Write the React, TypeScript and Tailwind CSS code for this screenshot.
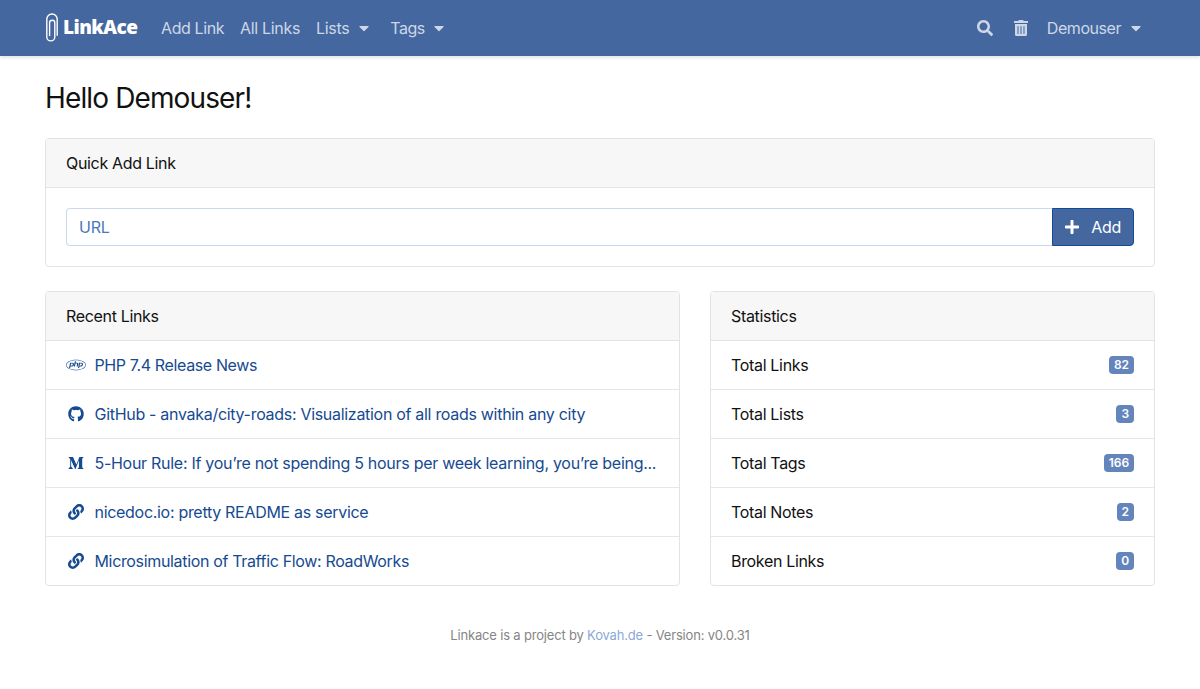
import { FaCaretDown, FaGithub, FaLink, FaMediumM, FaPhp, FaPlus, FaSearch, FaTrashAlt } from 'react-icons/fa';
import type { ReactNode } from 'react';

const links = [
  { icon: FaPhp, size: 'w-5 h-4', title: 'PHP 7.4 Release News', tracking: 'tracking-[-0.37px]' },
  { icon: FaGithub, size: 'w-4 h-4', title: 'GitHub - anvaka/city-roads: Visualization of all roads within any city', tracking: 'tracking-[-0.3px]' },
  { icon: FaMediumM, size: 'w-4 h-4', title: '5-Hour Rule: If you’re not spending 5 hours per week learning, you’re being...', tracking: 'tracking-[-0.285px]' },
  { icon: FaLink, size: 'w-4 h-4', title: 'nicedoc.io: pretty README as service', tracking: 'tracking-[-0.3px]' },
  { icon: FaLink, size: 'w-4 h-4', title: 'Microsimulation of Traffic Flow: RoadWorks', tracking: 'tracking-[-0.34px]' },
];

const stats = [
  { label: 'Total Links', value: 82 },
  { label: 'Total Lists', value: 3 },
  { label: 'Total Tags', value: 166 },
  { label: 'Total Notes', value: 2 },
  { label: 'Broken Links', value: 0 },
];

function Card({ title, className = '', children }: { title: string; className?: string; children: ReactNode }) {
  return (
    <section className={`overflow-hidden rounded border border-[#e3e3e3] bg-white ${className}`}>
      <h2 className="h-[49px] border-b border-[#e3e3e3] bg-[#f7f7f7] px-5 py-3 leading-6">{title}</h2>
      {children}
    </section>
  );
}

function Logo() {
  return (
    <a href="#" className="flex w-[93px] items-center text-white">
      <svg viewBox="0 0 14 29" className="mr-[4px] h-[29px] w-[14px] shrink-0 -translate-y-px" fill="none" stroke="currentColor" strokeWidth="1.4" strokeLinecap="round">
        <path d="M12.2 22.3V6.2a5.2 5.2 0 0 0-10.4 0v17.7a4 4 0 0 0 8 0V9.8a2.6 2.6 0 0 0-5.2 0v12.7" />
      </svg>
      <span className="-translate-y-px font-['Open_Sans',sans-serif] text-[19px] leading-7 font-extrabold tracking-[-0.55px]">LinkAce</span>
    </a>
  );
}

export default function App() {
  return (
    <div className="min-h-[689px] bg-white font-[Inter,sans-serif] text-base leading-6 tracking-[-0.33px] text-[#111]">
      <header className="flex h-14 items-center justify-between bg-[#44679f] px-[45px] text-[#cdd7e8] shadow-[0_1px_4px_rgba(0,0,0,0.15)]">
        <nav className="flex items-center">
          <Logo />
          <a href="#" className="ml-[23px] tracking-[-0.4px]">Add Link</a>
          <a href="#" className="ml-4">All Links</a>
          <a href="#" className="ml-4 flex items-center">Lists <FaCaretDown className="ml-2 h-4 w-[14px]" /></a>
          <a href="#" className="ml-[19px] flex items-center tracking-[-0.5px]">Tags <FaCaretDown className="ml-[7px] h-4 w-[14px]" /></a>
        </nav>
        <nav className="flex items-center pr-3">
          <FaSearch className="h-4 w-4" />
          <FaTrashAlt className="ml-5 h-4 w-4" />
          <a href="#" className="ml-[18px] flex items-center tracking-[-0.45px]">Demouser <FaCaretDown className="ml-2 h-4 w-[14px]" /></a>
        </nav>
      </header>
      <main className="px-[45px] pt-[25px]">
        <h1 className="h-[33px] text-[28px] leading-[34px] tracking-[-0.87px]">Hello Demouser!</h1>
        <Card title="Quick Add Link" className="mt-[23.5px] h-[129px]">
          <form className="flex p-5">
            <input
              type="text"
              placeholder="URL"
              className="h-[38px] min-w-0 flex-1 rounded-l border border-r-0 border-[#cbdaf0] px-3 tracking-[-0.2px] placeholder:text-[#4d77b8]"
            />
            <button type="button" className="flex h-[38px] w-[81.6px] items-center justify-between rounded-r border border-[#114c98] bg-[#44679f] px-3 text-white">
              <FaPlus className="h-4 w-[14px]" />
              <span>Add</span>
            </button>
          </form>
        </Card>
        <div className="mt-6 flex gap-[30px]">
          <Card title="Recent Links" className="w-[635px]">
            <ul className="divide-y divide-[#e6e6e6]">
              {links.map(({ icon: Icon, size, title, tracking }) => (
                <li key={title} className="py-3">
                  <a href="#" className="flex h-6 items-center px-5 text-[#164a91]">
                    <span className="mr-[8.5px] flex w-5 shrink-0 justify-center"><Icon className={size} /></span>
                    <span className={`whitespace-nowrap ${tracking}`}>{title}</span>
                  </a>
                </li>
              ))}
            </ul>
          </Card>
          <Card title="Statistics" className="w-[445px]">
            <ul className="divide-y divide-[#e6e6e6]">
              {stats.map(({ label, value }) => (
                <li key={label} className="flex items-center justify-between px-5 py-3">
                  <span>{label}</span>
                  <span className="flex h-[18px] items-center rounded bg-[#6485bc] px-[5px] text-xs leading-none font-semibold tracking-[-0.1px] text-white">{value}</span>
                </li>
              ))}
            </ul>
          </Card>
        </div>
        <footer className="mt-[39px] text-center text-[13px] leading-5 tracking-[-0.18px] text-[#858585]">
          Linkace is a project by <a href="#" className="text-[#8ca9d6]">Kovah.de</a> - Version: v0.0.31
        </footer>
      </main>
    </div>
  );
}
